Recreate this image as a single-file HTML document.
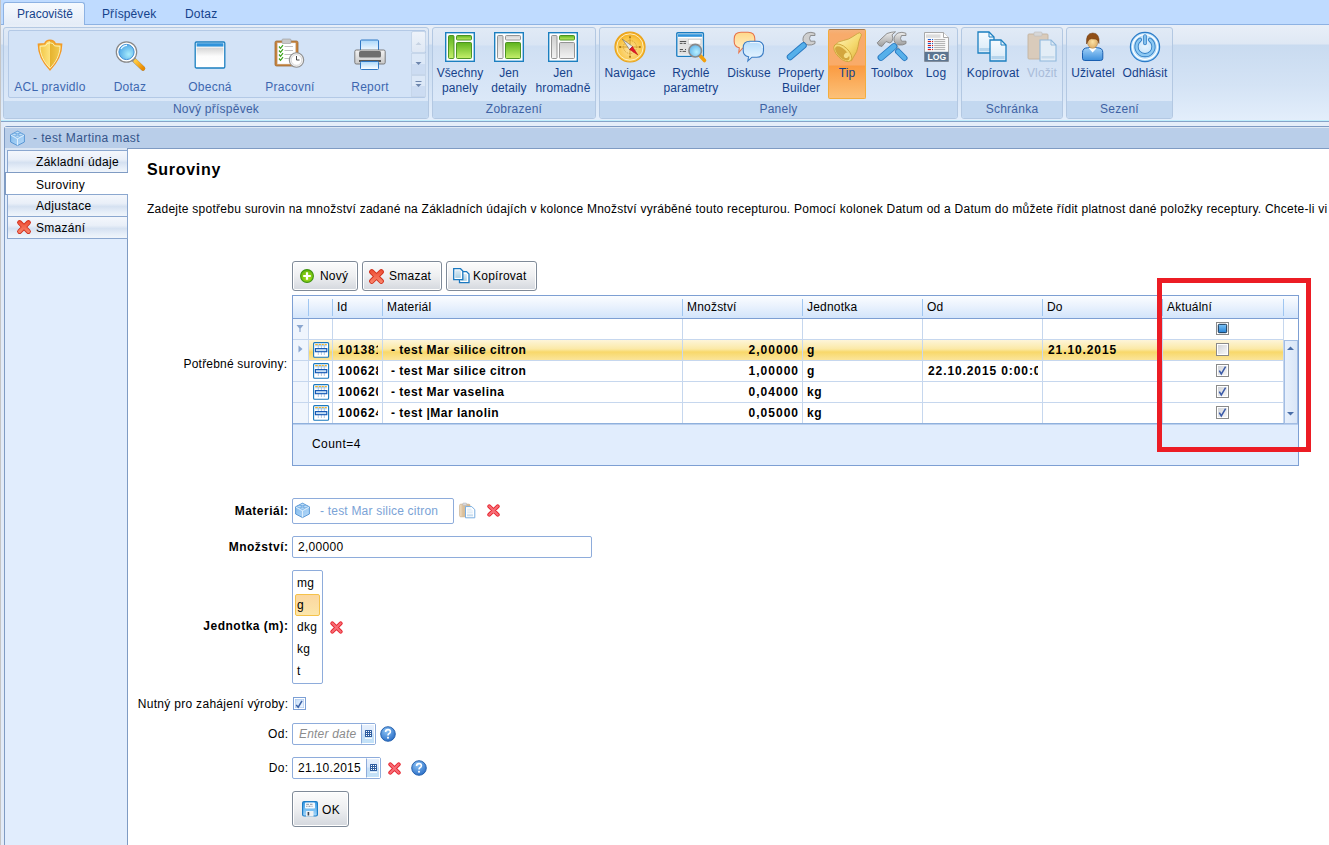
<!DOCTYPE html>
<html><head><meta charset="utf-8">
<style>
*{box-sizing:border-box;margin:0;padding:0}
html,body{width:1329px;height:845px;overflow:hidden;background:#fff;font-family:"Liberation Sans",sans-serif;font-size:12px;color:#000}
.a{position:absolute}
.t{position:absolute;white-space:nowrap;line-height:12px;font-size:12px;letter-spacing:0.25px}
</style></head><body>
<div class="a" style="left:0px;top:0px;width:1px;height:845px;background:#c5c5c5"></div>
<div class="a" style="left:1px;top:0px;width:1328px;height:24px;background:#bfdbff"></div>
<div class="a" style="left:1px;top:24px;width:1328px;height:97px;background:linear-gradient(#e9eff8 0px,#dfe8f4 20px,#c9dbf0 21px,#d4e3f5 61px,#e3eefb 96px)"></div>
<div class="a" style="left:1px;top:24px;width:1328px;height:1px;background:#8db2e3"></div>
<div class="a" style="left:1px;top:120px;width:1328px;height:1px;background:#bfeefc"></div>
<div class="a" style="left:1px;top:121px;width:1328px;height:1px;background:#86a3c8"></div>
<div class="a" style="left:1px;top:122px;width:1328px;height:4px;background:#e5eef9"></div>
<div class="a" style="left:3px;top:2px;width:82px;height:23px;border:1px solid #8db2e3;border-bottom:none;border-radius:3px 3px 0 0;background:linear-gradient(#f5f9fe,#e4ecf7)"></div>
<div class="t" style="left:17px;top:8px;font-size:12px;line-height:12px;color:#15428b;letter-spacing:0px;">Pracoviště</div>
<div class="t" style="left:102px;top:8px;font-size:12px;line-height:12px;color:#15428b;letter-spacing:0.1px;">Příspěvek</div>
<div class="t" style="left:185px;top:8px;font-size:12px;line-height:12px;color:#15428b;letter-spacing:0.2px;">Dotaz</div>
<div class="a" style="left:3px;top:27px;width:426px;height:92px;border:1px solid #b3c8e2;border-radius:3px;background:linear-gradient(#e1eaf6 0px,#d9e5f4 17px,#cfdff3 18px,#dbe8f8 73px);overflow:hidden"><div class="a" style="left:0;top:73px;width:424px;height:18px;background:#c3d8f0"></div></div>
<div class="t" style="left:3px;top:103px;width:426px;text-align:center;color:#3e62a3;letter-spacing:0.25px">Nový příspěvek</div>
<div class="a" style="left:432px;top:27px;width:164px;height:92px;border:1px solid #b3c8e2;border-radius:3px;background:linear-gradient(#e1eaf6 0px,#d9e5f4 17px,#cfdff3 18px,#dbe8f8 73px);overflow:hidden"><div class="a" style="left:0;top:73px;width:162px;height:18px;background:#c3d8f0"></div></div>
<div class="t" style="left:432px;top:103px;width:164px;text-align:center;color:#3e62a3;letter-spacing:0.25px">Zobrazení</div>
<div class="a" style="left:599px;top:27px;width:359px;height:92px;border:1px solid #b3c8e2;border-radius:3px;background:linear-gradient(#e1eaf6 0px,#d9e5f4 17px,#cfdff3 18px,#dbe8f8 73px);overflow:hidden"><div class="a" style="left:0;top:73px;width:357px;height:18px;background:#c3d8f0"></div></div>
<div class="t" style="left:599px;top:103px;width:359px;text-align:center;color:#3e62a3;letter-spacing:0.25px">Panely</div>
<div class="a" style="left:961px;top:27px;width:102px;height:92px;border:1px solid #b3c8e2;border-radius:3px;background:linear-gradient(#e1eaf6 0px,#d9e5f4 17px,#cfdff3 18px,#dbe8f8 73px);overflow:hidden"><div class="a" style="left:0;top:73px;width:100px;height:18px;background:#c3d8f0"></div></div>
<div class="t" style="left:961px;top:103px;width:102px;text-align:center;color:#3e62a3;letter-spacing:0.25px">Schránka</div>
<div class="a" style="left:1066px;top:27px;width:107px;height:92px;border:1px solid #b3c8e2;border-radius:3px;background:linear-gradient(#e1eaf6 0px,#d9e5f4 17px,#cfdff3 18px,#dbe8f8 73px);overflow:hidden"><div class="a" style="left:0;top:73px;width:105px;height:18px;background:#c3d8f0"></div></div>
<div class="t" style="left:1066px;top:103px;width:107px;text-align:center;color:#3e62a3;letter-spacing:0.25px">Sezení</div>
<div class="a" style="left:8px;top:30px;width:418px;height:68px;border:1px solid #b3c9e6;border-radius:2px;background:#d3e3f7"></div>
<div class="a" style="left:411px;top:31px;width:15px;height:22px;border:1px solid #c6d6ea;border-radius:2px;background:linear-gradient(#eef3fa,#dfe8f4)"></div>
<div class="a" style="left:411px;top:53px;width:15px;height:22px;border:1px solid #c6d6ea;background:linear-gradient(#dce8f7 50%,#ccdcf2 50%)"></div>
<div class="a" style="left:411px;top:75px;width:15px;height:22px;border:1px solid #c6d6ea;background:linear-gradient(#dce8f7 50%,#ccdcf2 50%)"></div>
<svg class="a" style="left:415px;top:61px" width="7" height="5" viewBox="0 0 7 5"><path d="M0.5 1 L6.5 1 L3.5 4 Z" fill="#6d86ad"/></svg>
<svg class="a" style="left:415px;top:81px" width="7" height="7" viewBox="0 0 7 7"><rect x="0.5" y="0" width="6" height="1" fill="#6d86ad"/><path d="M0.5 3 L6.5 3 L3.5 6 Z" fill="#6d86ad"/></svg>
<svg class="a" style="left:415px;top:41px" width="7" height="5" viewBox="0 0 7 5"><path d="M0.5 4 L6.5 4 L3.5 1 Z" fill="#c7d3e3"/></svg>
<div class="a" style="left:828px;top:29px;width:38px;height:70px;border:1px solid #f3ad3c;border-top-color:#a97a48;border-radius:2px;background:linear-gradient(#f4b27a 0px,#f8ab6b 4px,#f9ab69 35px,#fa9b42 36px,#fcc27a 69px)"></div>
<svg class="a" style="left:34px;top:39px;overflow:visible" width="32" height="32" viewBox="0 0 32 32"><defs><linearGradient id="sh1" x1="0" y1="0" x2="1" y2="0"><stop offset="0" stop-color="#f0c23c"/><stop offset="0.49" stop-color="#fde27e"/><stop offset="0.5" stop-color="#e6b22e"/><stop offset="1" stop-color="#f4cf56"/></linearGradient></defs><path d="M16 1.2 Q20 1.2 21.3 4.8 L27.6 5.3 C27.6 16 22.5 24 16 30.8 C9.5 24 4.4 16 4.4 5.3 L10.7 4.8 Q12 1.2 16 1.2 Z" fill="url(#sh1)" stroke="#f29a28" stroke-width="1.5"/><path d="M16 1.2 Q20 1.2 21.3 4.8 L27.6 5.3 C27.6 16 22.5 24 16 30.8 C9.5 24 4.4 16 4.4 5.3 L10.7 4.8 Q12 1.2 16 1.2 Z" transform="translate(16 16.5) scale(0.86) translate(-16 -16)" fill="none" stroke="#fff6c6" stroke-width="1"/></svg>
<svg class="a" style="left:114px;top:39px;overflow:visible" width="32" height="32" viewBox="0 0 32 32"><defs><radialGradient id="mg" cx="0.65" cy="0.65" r="0.7"><stop offset="0" stop-color="#a8ecfc"/><stop offset="1" stop-color="#4da6e6"/></radialGradient><linearGradient id="mh" x1="0" y1="0" x2="1" y2="1"><stop offset="0" stop-color="#ffc940"/><stop offset="1" stop-color="#e98a00"/></linearGradient></defs><path d="M19 20 L29 29.5" stroke="#8a8a8a" stroke-width="4.5" stroke-linecap="round"/><path d="M21.5 22.3 L29 29.5" stroke="url(#mh)" stroke-width="4.3" stroke-linecap="round"/><circle cx="12.5" cy="13" r="10.2" fill="#fff" stroke="#888" stroke-width="1.2"/><circle cx="12.5" cy="13" r="7.6" fill="url(#mg)" stroke="#3f8fd6" stroke-width="1"/><path d="M7 10 Q9 6.5 13 6.3" fill="none" stroke="#e8f8ff" stroke-width="1.2"/></svg>
<svg class="a" style="left:194px;top:39px;overflow:visible" width="32" height="32" viewBox="0 0 32 32"><defs><linearGradient id="wn" x1="0" y1="0" x2="0" y2="1"><stop offset="0" stop-color="#d4d4d4"/><stop offset="0.45" stop-color="#fbfbfb"/><stop offset="1" stop-color="#fff"/></linearGradient></defs><rect x="1.2" y="3" width="29.6" height="26" rx="1.2" fill="#fff" stroke="#1b7fc0" stroke-width="1.3"/><rect x="2.6" y="4.2" width="26.8" height="3.4" fill="#2f93db"/><rect x="2.6" y="8.6" width="26.8" height="19" fill="url(#wn)"/></svg>
<svg class="a" style="left:274px;top:38px;overflow:visible" width="32" height="32" viewBox="0 0 32 32"><rect x="1" y="3" width="23" height="25" rx="1.5" fill="#c8843d" stroke="#9b6a38" stroke-width="0.8"/><rect x="3.5" y="5" width="18" height="21" fill="#fff" stroke="#d9d9d9" stroke-width="0.5"/><rect x="8" y="1" width="9" height="4.5" rx="1" fill="#c8c8c8" stroke="#9a9a9a" stroke-width="0.6"/><path d="M5 8.5 L6.5 10.3 L9 7.2" fill="none" stroke="#3aa21a" stroke-width="1.2"/><path d="M10.5 8.5H19" stroke="#b9b9b9" stroke-width="0.9"/><path d="M5 12.5 L6.5 14.3 L9 11.2" fill="none" stroke="#3aa21a" stroke-width="1.2"/><path d="M10.5 12.5H19" stroke="#b9b9b9" stroke-width="0.9"/><path d="M5 16.5 L6.5 18.3 L9 15.2" fill="none" stroke="#3aa21a" stroke-width="1.2"/><path d="M10.5 16.5H19" stroke="#b9b9b9" stroke-width="0.9"/><path d="M5 20.5 L6.5 22.3 L9 19.2" fill="none" stroke="#3aa21a" stroke-width="1.2"/><path d="M10.5 20.5H19" stroke="#b9b9b9" stroke-width="0.9"/><circle cx="22.5" cy="22" r="7.2" fill="#f2f2f2" stroke="#8f8f8f" stroke-width="1.1"/><circle cx="22.5" cy="22" r="5.3" fill="#fff" stroke="#c4c4c4" stroke-width="0.6"/><path d="M22.5 18V22H25.5" fill="none" stroke="#333" stroke-width="0.9"/></svg>
<svg class="a" style="left:354px;top:39px;overflow:visible" width="32" height="32" viewBox="0 0 32 32"><defs><linearGradient id="pp" x1="0" y1="0" x2="0" y2="1"><stop offset="0" stop-color="#a9d7fb"/><stop offset="1" stop-color="#ffffff"/></linearGradient><linearGradient id="pb" x1="0" y1="0" x2="0" y2="1"><stop offset="0" stop-color="#f3f3f3"/><stop offset="1" stop-color="#c9c9c9"/></linearGradient></defs><rect x="6.5" y="1" width="18" height="12" rx="1" fill="url(#pp)" stroke="#2f78c4" stroke-width="1"/><rect x="0.8" y="11" width="30.4" height="14" rx="1.5" fill="url(#pb)" stroke="#6f6f6f" stroke-width="0.9"/><rect x="5" y="12" width="22" height="6.5" rx="1.5" fill="#6e6e6e"/><rect x="5" y="21" width="22" height="2" fill="#5a5a5a"/><rect x="6.5" y="22.5" width="18" height="8" rx="1" fill="url(#pp)" stroke="#2f78c4" stroke-width="1"/></svg>
<svg class="a" style="left:445px;top:32px;overflow:visible" width="30" height="30" viewBox="0 0 30 30"><defs><linearGradient id="lg" x1="0" y1="0" x2="0" y2="1"><stop offset="0" stop-color="#5db31d"/><stop offset="1" stop-color="#c5f06b"/></linearGradient><linearGradient id="lgr" x1="0" y1="0" x2="0" y2="1"><stop offset="0" stop-color="#cfcfcf"/><stop offset="1" stop-color="#f3f3f3"/></linearGradient></defs><rect x="0.7" y="0.7" width="28.6" height="28.6" fill="#fff" stroke="#1b7fc0" stroke-width="1.4"/><rect x="3.5" y="3.5" width="5.5" height="23" rx="1" fill="url(#lg)" stroke="#3f8a16" stroke-width="0.9"/><rect x="11.5" y="3.5" width="15" height="4.5" rx="1" fill="url(#lg)" stroke="#3f8a16" stroke-width="0.9"/><rect x="11.5" y="10.5" width="15" height="16" rx="1" fill="url(#lg)" stroke="#3f8a16" stroke-width="0.9"/></svg>
<svg class="a" style="left:494px;top:32px;overflow:visible" width="30" height="30" viewBox="0 0 30 30"><defs><linearGradient id="lg" x1="0" y1="0" x2="0" y2="1"><stop offset="0" stop-color="#5db31d"/><stop offset="1" stop-color="#c5f06b"/></linearGradient><linearGradient id="lgr" x1="0" y1="0" x2="0" y2="1"><stop offset="0" stop-color="#cfcfcf"/><stop offset="1" stop-color="#f3f3f3"/></linearGradient></defs><rect x="0.7" y="0.7" width="28.6" height="28.6" fill="#fff" stroke="#1b7fc0" stroke-width="1.4"/><rect x="3.5" y="3.5" width="5.5" height="23" rx="1" fill="url(#lgr)" stroke="#8a8a8a" stroke-width="0.9"/><rect x="11.5" y="3.5" width="15" height="4.5" rx="1" fill="url(#lgr)" stroke="#8a8a8a" stroke-width="0.9"/><rect x="11.5" y="10.5" width="15" height="16" rx="1" fill="url(#lg)" stroke="#3f8a16" stroke-width="0.9"/></svg>
<svg class="a" style="left:548px;top:32px;overflow:visible" width="30" height="30" viewBox="0 0 30 30"><defs><linearGradient id="lg" x1="0" y1="0" x2="0" y2="1"><stop offset="0" stop-color="#5db31d"/><stop offset="1" stop-color="#c5f06b"/></linearGradient><linearGradient id="lgr" x1="0" y1="0" x2="0" y2="1"><stop offset="0" stop-color="#cfcfcf"/><stop offset="1" stop-color="#f3f3f3"/></linearGradient></defs><rect x="0.7" y="0.7" width="28.6" height="28.6" fill="#fff" stroke="#1b7fc0" stroke-width="1.4"/><rect x="3.5" y="3.5" width="5.5" height="23" rx="1" fill="url(#lgr)" stroke="#8a8a8a" stroke-width="0.9"/><rect x="11.5" y="3.5" width="15" height="4.5" rx="1" fill="url(#lg)" stroke="#3f8a16" stroke-width="0.9"/><rect x="11.5" y="10.5" width="15" height="16" rx="1" fill="url(#lgr)" stroke="#8a8a8a" stroke-width="0.9"/></svg>
<svg class="a" style="left:614px;top:31px;overflow:visible" width="32" height="32" viewBox="0 0 32 32"><defs><radialGradient id="cp" cx="0.5" cy="0.6" r="0.55"><stop offset="0" stop-color="#fde3a0"/><stop offset="0.75" stop-color="#f9c443"/><stop offset="1" stop-color="#f2aa1c"/></radialGradient></defs><circle cx="16" cy="16" r="15" fill="url(#cp)" stroke="#e9a21a" stroke-width="1.2"/><circle cx="16" cy="16" r="13.2" fill="none" stroke="#fff4cf" stroke-width="0.9"/><circle cx="16" cy="16" r="6.5" fill="none" stroke="#c9921f" stroke-width="0.7" stroke-dasharray="1.2 0.8"/><path d="M16 6V26M6 16H26" stroke="#d6a030" stroke-width="1"/><path d="M15.3 5.2H16.7V7H15.3ZM15.3 25H16.7V26.8H15.3ZM5.2 15.3H7V16.7H5.2ZM25 15.3H26.8V16.7H25Z" fill="#9a6a10"/><path d="M8.3 8.1 L18.5 15.5 L15.5 18.5 Z" fill="#e9ecf2" stroke="#555" stroke-width="0.5"/><path d="M23.9 24 L18.5 15.5 L15.5 18.5 Z" fill="#e2152a" stroke="#a00" stroke-width="0.4"/></svg>
<svg class="a" style="left:676px;top:32px;overflow:visible" width="32" height="32" viewBox="0 0 32 32"><defs><radialGradient id="qg" cx="0.6" cy="0.6" r="0.7"><stop offset="0" stop-color="#b7f0ff"/><stop offset="1" stop-color="#59aee8"/></radialGradient></defs><rect x="0.8" y="0.8" width="26.6" height="23.6" rx="1" fill="#fff" stroke="#1a7cc0" stroke-width="1.4"/><rect x="2" y="2.2" width="24.2" height="2.6" fill="#2f93db"/><rect x="2.2" y="6.2" width="24" height="16.5" fill="#e2e2e2"/><rect x="12.3" y="7.4" width="12.6" height="4.7" fill="#fff" stroke="#bbb" stroke-width="0.5"/><path d="M3.8 9.5H10.2M3.8 11.4H6.5M7.5 11.4H10M3.8 17.5H7M9 17.5H10M3.8 19.4H5.5M6.5 19.4H10" stroke="#444" stroke-width="0.9"/><path d="M23.5 23 L28.5 28.5" stroke="#f29f0c" stroke-width="3.6" stroke-linecap="round"/><circle cx="19.2" cy="18.7" r="6.3" fill="url(#qg)" stroke="#8a8a8a" stroke-width="1.6"/></svg>
<svg class="a" style="left:733px;top:31px;overflow:visible" width="32" height="32" viewBox="0 0 32 32"><defs><linearGradient id="bo" x1="0" y1="0" x2="0" y2="1"><stop offset="0" stop-color="#ffd88a"/><stop offset="1" stop-color="#fff3cf"/></linearGradient><linearGradient id="bb" x1="0" y1="0" x2="0" y2="1"><stop offset="0" stop-color="#b5dcfb"/><stop offset="1" stop-color="#eef8ff"/></linearGradient></defs><path d="M8 1.2 H15 Q21.8 1.2 21.8 8 V10.5 Q21.8 17.2 15 17.2 H9.5 L5.8 21.5 L6.3 16.8 Q1.2 15.5 1.2 10.5 V8 Q1.2 1.2 8 1.2 Z" fill="url(#bo)" stroke="#e8744a" stroke-width="1.1"/><path d="M17 10.3 H23.8 Q30.5 10.3 30.5 16.8 V19.5 Q30.5 26.2 23.8 26.2 H19 L14.8 30 L15.6 25.8 Q10.2 24.8 10.2 19.5 V16.8 Q10.2 10.3 17 10.3 Z" fill="url(#bb)" stroke="#3b7cc4" stroke-width="1.1"/><path d="M17 11.5 H23.8 Q29.3 11.5 29.3 16.8" fill="none" stroke="#fff" stroke-width="0.8"/></svg>
<svg class="a" style="left:785px;top:30px;overflow:visible" width="32" height="32" viewBox="0 0 32 32"><path d="M29.8 3.2 Q26 1.5 22 3 Q17.5 5.5 18 10.5 Q18.8 14.5 23 15 Q27 15.5 30 13.5 L30 11.2 L25.5 11.2 Q23.5 8.5 25.5 5.5 L30 5.5 Z" fill="#cfcfcf" stroke="#858585" stroke-width="0.9"/><path d="M18.5 15.5 L5 27" stroke="#2878c0" stroke-width="6.5" stroke-linecap="round"/><path d="M18.5 15.5 L5 27" stroke="#56b0ea" stroke-width="4.7" stroke-linecap="round"/></svg>
<svg class="a" style="left:832px;top:31px;overflow:visible" width="32" height="32" viewBox="0 0 32 32"><defs><linearGradient id="bl" x1="0" y1="0" x2="1" y2="1"><stop offset="0" stop-color="#fff6c4"/><stop offset="0.55" stop-color="#f5da70"/><stop offset="1" stop-color="#e0b03a"/></linearGradient></defs><path d="M2.5 14.5 Q6 10 11.5 9.5 Q17 8.5 21 5.5 L25.5 2.6 L27.5 1.8 L29.5 3.5 L28.8 5.6 Q26.5 10 26 15.5 Q25.5 20.5 21.5 26 L19.5 29.8 Z" fill="url(#bl)" stroke="#c8a03a" stroke-width="0.8" stroke-linejoin="round"/><ellipse cx="10.8" cy="21.8" rx="11.2" ry="5.8" transform="rotate(44 10.8 21.8)" fill="#f6dc7a" stroke="#c9a035" stroke-width="0.8"/><ellipse cx="10.3" cy="22.3" rx="9.2" ry="4.3" transform="rotate(44 10.3 22.3)" fill="#d3a63e"/><ellipse cx="14.5" cy="24.3" rx="2.3" ry="2.9" transform="rotate(44 14.5 24.3)" fill="#f7e08a"/></svg>
<svg class="a" style="left:876px;top:30px;overflow:visible" width="32" height="32" viewBox="0 0 32 32"><defs><linearGradient id="tg" x1="0" y1="0" x2="0" y2="1"><stop offset="0" stop-color="#f0f0f0"/><stop offset="1" stop-color="#9c9c9c"/></linearGradient></defs><path d="M29.8 3.2 Q26 1.5 22 3 Q17.5 5.5 18 10.5 Q18.8 14.5 23 15 Q27 15.5 30 13.5 L30 11.2 L25.5 11.2 Q23.5 8.5 25.5 5.5 L30 5.5 Z" fill="url(#tg)" stroke="#858585" stroke-width="0.9"/><path d="M19 13.5 L22.5 19.5" stroke="#bdbdbd" stroke-width="3"/><path d="M22 21.5 L28.5 28" stroke="#2878c0" stroke-width="6" stroke-linecap="round"/><path d="M22 21.5 L28.5 28" stroke="#56b0ea" stroke-width="4.2" stroke-linecap="round"/><path d="M1.2 12.8 L5 9 L11 3.5 Q15 2 19.5 1.8 L16 4.8 Q17.8 8 16 11.5 L13.9 13 L10 11.5 L5.9 16.5 L3 15.5 Z" fill="url(#tg)" stroke="#858585" stroke-width="0.9" stroke-linejoin="round"/><path d="M18 16.5 L5 27.5" stroke="#2878c0" stroke-width="6.8" stroke-linecap="round"/><path d="M18 16.5 L5 27.5" stroke="#56b0ea" stroke-width="5" stroke-linecap="round"/></svg>
<svg class="a" style="left:923px;top:32px;overflow:visible" width="32" height="32" viewBox="0 0 32 32"><path d="M1.5 0.5 H20.5 L25.5 5.5 V29.5 H1.5 Z" fill="#fafafa" stroke="#a0a0a0" stroke-width="0.9"/><rect x="3" y="2.4" width="14.5" height="3.4" fill="#dcdcdc"/><path d="M20.5 0.5 V5.5 H25.5" fill="#fff" stroke="#a0a0a0" stroke-width="0.9"/><rect x="4.8" y="7" width="3.2" height="1.1" fill="#1d5fd0"/><rect x="9" y="7" width="1.1" height="1.1" fill="#1d5fd0"/><rect x="11.2" y="7" width="11" height="1.1" fill="#b5b5b5"/><rect x="4.8" y="9" width="3.2" height="1.1" fill="#d81818"/><rect x="9" y="9" width="1.1" height="1.1" fill="#d81818"/><rect x="11.2" y="9" width="11" height="1.1" fill="#b5b5b5"/><rect x="4.8" y="11" width="3.2" height="1.1" fill="#1d5fd0"/><rect x="9" y="11" width="1.1" height="1.1" fill="#1d5fd0"/><rect x="11.2" y="11" width="11" height="1.1" fill="#b5b5b5"/><rect x="4.8" y="13" width="3.2" height="1.1" fill="#d81818"/><rect x="9" y="13" width="1.1" height="1.1" fill="#d81818"/><rect x="11.2" y="13" width="11" height="1.1" fill="#b5b5b5"/><rect x="4.8" y="15" width="3.2" height="1.1" fill="#1d5fd0"/><rect x="9" y="15" width="1.1" height="1.1" fill="#1d5fd0"/><rect x="11.2" y="15" width="11" height="1.1" fill="#b5b5b5"/><rect x="4.8" y="17" width="3.2" height="1.1" fill="#d81818"/><rect x="9" y="17" width="1.1" height="1.1" fill="#d81818"/><rect x="11.2" y="17" width="11" height="1.1" fill="#b5b5b5"/><rect x="1.5" y="19.8" width="24" height="9.7" fill="#5d7590"/><text x="13.8" y="27.9" font-family="Liberation Sans" font-weight="bold" font-size="8.6" fill="#fff" text-anchor="middle">LOG</text></svg>
<svg class="a" style="left:977px;top:31px;overflow:visible" width="32" height="32" viewBox="0 0 32 32"><defs><linearGradient id="cpg" x1="0" y1="0" x2="0" y2="1"><stop offset="0" stop-color="#f6fbff"/><stop offset="1" stop-color="#d7e9f7"/></linearGradient></defs><path d="M1 1 H12 L17 6 V22 H1 Z" fill="url(#cpg)" stroke="#1b7fc0" stroke-width="1.3"/><path d="M12 1 V6 H17" fill="none" stroke="#1b7fc0" stroke-width="1"/><rect x="2.5" y="17" width="13" height="3" fill="#b5d4ec"/><path d="M13 9 H24 L29 14 V30 H13 Z" fill="url(#cpg)" stroke="#1b7fc0" stroke-width="1.3"/><path d="M24 9 V14 H29" fill="none" stroke="#1b7fc0" stroke-width="1"/><rect x="14.5" y="25" width="13" height="3" fill="#b5d4ec"/></svg>
<svg class="a" style="left:1027px;top:31px;overflow:visible" width="32" height="32" viewBox="0 0 32 32"><rect x="1" y="3" width="20" height="25" rx="1" fill="#d9cbbb" stroke="#c3b3a0" stroke-width="0.9"/><rect x="7" y="1" width="8" height="4" rx="1" fill="#d7d7d7" stroke="#bcbcbc" stroke-width="0.6"/><path d="M13 9 H24 L29 14 V30 H13 Z" fill="#e3edf6" stroke="#8fb8dc" stroke-width="1.1"/><path d="M24 9 V14 H29" fill="none" stroke="#8fb8dc" stroke-width="0.9"/><rect x="14.5" y="25" width="13" height="2.5" fill="#c9dcec"/></svg>
<svg class="a" style="left:1077px;top:31px;overflow:visible" width="32" height="32" viewBox="0 0 32 32"><defs><linearGradient id="ub" x1="0" y1="0" x2="0" y2="1"><stop offset="0" stop-color="#9fd0f8"/><stop offset="1" stop-color="#3d8fdc"/></linearGradient><radialGradient id="uf" cx="0.5" cy="0.5" r="0.6"><stop offset="0" stop-color="#fde3a6"/><stop offset="1" stop-color="#d9a45c"/></radialGradient></defs><path d="M5.5 21.5 Q5.5 17 10.5 16.8 H20.8 Q25.8 17 25.8 21.5 V27.3 Q25.8 29.5 23.5 29.5 H7.8 Q5.5 29.5 5.5 27.3 Z" fill="url(#ub)" stroke="#1b5fb0" stroke-width="1"/><path d="M11.5 17 L15.6 21.5 L19.8 17 Z" fill="#fff"/><ellipse cx="15.6" cy="10.8" rx="5.3" ry="6.5" fill="url(#uf)" stroke="#a87a3e" stroke-width="0.5"/><path d="M9.5 13 Q8.5 2 15.8 2 Q23 2 22 12.5 Q21 7.5 16.5 8 Q12 7 10.8 10.5 Z" fill="#8f4f18" stroke="#6c3a10" stroke-width="0.5"/></svg>
<svg class="a" style="left:1129px;top:31px;overflow:visible" width="32" height="32" viewBox="0 0 32 32"><defs><radialGradient id="pw" cx="0.5" cy="0.45" r="0.55"><stop offset="0" stop-color="#e9f5ff"/><stop offset="1" stop-color="#a8d6f7"/></radialGradient></defs><circle cx="16" cy="16" r="14.6" fill="url(#pw)" stroke="#2a7bc8" stroke-width="1.2"/><circle cx="16" cy="16" r="12.4" fill="none" stroke="#fff" stroke-width="1.2"/><path d="M11 8.8 A8.5 8.5 0 1 0 21 8.8" fill="none" stroke="#2f7dc4" stroke-width="4.2" stroke-linecap="round"/><path d="M11 8.8 A8.5 8.5 0 1 0 21 8.8" fill="none" stroke="#8cc8f2" stroke-width="2.4" stroke-linecap="round"/><path d="M16 5 V12.5" stroke="#2f7dc4" stroke-width="3.6" stroke-linecap="round"/><path d="M16 5 V12.5" stroke="#8cc8f2" stroke-width="1.8" stroke-linecap="round"/></svg>
<div class="t" style="left:5px;top:81px;width:90px;text-align:center;color:#3d67b0">ACL pravidlo</div>
<div class="t" style="left:85px;top:81px;width:90px;text-align:center;color:#3d67b0">Dotaz</div>
<div class="t" style="left:165px;top:81px;width:90px;text-align:center;color:#3d67b0">Obecná</div>
<div class="t" style="left:245px;top:81px;width:90px;text-align:center;color:#3d67b0">Pracovní</div>
<div class="t" style="left:325px;top:81px;width:90px;text-align:center;color:#3d67b0">Report</div>
<div class="t" style="left:410px;top:67px;width:100px;text-align:center;color:#15428b;letter-spacing:0.1px">Všechny</div>
<div class="t" style="left:410px;top:82px;width:100px;text-align:center;color:#15428b;letter-spacing:0.1px">panely</div>
<div class="t" style="left:459px;top:67px;width:100px;text-align:center;color:#15428b;letter-spacing:0.1px">Jen</div>
<div class="t" style="left:459px;top:82px;width:100px;text-align:center;color:#15428b;letter-spacing:0.1px">detaily</div>
<div class="t" style="left:513px;top:67px;width:100px;text-align:center;color:#15428b;letter-spacing:0.1px">Jen</div>
<div class="t" style="left:513px;top:82px;width:100px;text-align:center;color:#15428b;letter-spacing:0.1px">hromadně</div>
<div class="t" style="left:580px;top:67px;width:100px;text-align:center;color:#15428b;letter-spacing:0.1px">Navigace</div>
<div class="t" style="left:641px;top:67px;width:100px;text-align:center;color:#15428b;letter-spacing:0.1px">Rychlé</div>
<div class="t" style="left:641px;top:82px;width:100px;text-align:center;color:#15428b;letter-spacing:0.1px">parametry</div>
<div class="t" style="left:699px;top:67px;width:100px;text-align:center;color:#15428b;letter-spacing:0.1px">Diskuse</div>
<div class="t" style="left:751px;top:67px;width:100px;text-align:center;color:#15428b;letter-spacing:0.1px">Property</div>
<div class="t" style="left:751px;top:82px;width:100px;text-align:center;color:#15428b;letter-spacing:0.1px">Builder</div>
<div class="t" style="left:797px;top:67px;width:100px;text-align:center;color:#15428b;letter-spacing:0.1px">Tip</div>
<div class="t" style="left:842px;top:67px;width:100px;text-align:center;color:#15428b;letter-spacing:0.1px">Toolbox</div>
<div class="t" style="left:886px;top:67px;width:100px;text-align:center;color:#15428b;letter-spacing:0.1px">Log</div>
<div class="t" style="left:943px;top:67px;width:100px;text-align:center;color:#15428b;letter-spacing:0.1px">Kopírovat</div>
<div class="t" style="left:992px;top:67px;width:100px;text-align:center;color:#a9bcd9;letter-spacing:0.1px">Vložit</div>
<div class="t" style="left:1043px;top:67px;width:100px;text-align:center;color:#15428b;letter-spacing:0.1px">Uživatel</div>
<div class="t" style="left:1095px;top:67px;width:100px;text-align:center;color:#15428b;letter-spacing:0.1px">Odhlásit</div>
<div class="a" style="left:1px;top:122px;width:3px;height:723px;background:#e2ebf8"></div>
<div class="a" style="left:4px;top:126px;width:1325px;height:719px;border:1px solid #7f9bc3;border-right:none;border-bottom:none;border-radius:3px 0 0 0;background:#e1edfd"></div>
<div class="a" style="left:5px;top:127px;width:1324px;height:1px;background:#dfe8f4"></div>
<div class="a" style="left:5px;top:128px;width:1324px;height:20px;background:#b9cee9"></div>
<div class="a" style="left:5px;top:148px;width:122px;height:2px;background:#dce7f5"></div>
<div class="a" style="left:127px;top:148px;width:1202px;height:1px;background:#7f9bc3"></div>
<svg class="a" style="left:10px;top:130px;overflow:visible" width="16" height="16" viewBox="0 0 16 16"><defs><linearGradient id="cb" x1="0" y1="0" x2="1" y2="1"><stop offset="0" stop-color="#7fb8ea"/><stop offset="1" stop-color="#b7dafa"/></linearGradient></defs><path d="M0.6 4.8 L7.5 1.2 L14.4 4.8 L14.4 12 L7.5 15.6 L0.6 12 Z" fill="url(#cb)" stroke="#4f90d0" stroke-width="0.9" stroke-linejoin="round"/><path d="M0.8 5 L7.5 8.6 L14.2 5 L7.5 1.4 Z" fill="#a6d0f6"/><ellipse cx="7.5" cy="2.6" rx="2.1" ry="1" fill="#c9e4fb" stroke="#5a9ad6" stroke-width="0.6"/><ellipse cx="4.3" cy="4.4" rx="2.1" ry="1" fill="#c9e4fb" stroke="#5a9ad6" stroke-width="0.6"/><ellipse cx="10.7" cy="4.4" rx="2.1" ry="1" fill="#c9e4fb" stroke="#5a9ad6" stroke-width="0.6"/><ellipse cx="7.5" cy="6.2" rx="2.1" ry="1" fill="#c9e4fb" stroke="#5a9ad6" stroke-width="0.6"/><path d="M1 5.3 L7.5 8.8 L14 5.3 M7.5 8.8 V15.3" fill="none" stroke="#eef8ff" stroke-width="0.8"/></svg>
<div class="t" style="left:33px;top:132px;font-size:12px;line-height:12px;color:#34548a;letter-spacing:0.4px;">- test Martina mast</div>
<div class="a" style="left:127px;top:149px;width:1202px;height:696px;background:#fff"></div>
<div class="a" style="left:127px;top:149px;width:1px;height:696px;background:#7f9bc3"></div>
<div class="a" style="left:7px;top:150px;width:121px;height:23px;border:1px solid #8ba7cf;background:linear-gradient(#f4f7fc 0%,#e9eff8 40%,#d5e1f1 55%,#e6eef8 80%,#f0f5fb 100%)"></div>
<div class="t" style="left:36px;top:156px;font-size:12px;line-height:12px;letter-spacing:0.3px;">Základní údaje</div>
<div class="a" style="left:5px;top:172px;width:123px;height:23px;background:#fff;border:1px solid #7f9bc3;border-right:none"></div>
<div class="t" style="left:36px;top:179px;font-size:12px;line-height:12px;letter-spacing:0.3px;">Suroviny</div>
<div class="a" style="left:7px;top:194px;width:121px;height:23px;border:1px solid #8ba7cf;background:linear-gradient(#f4f7fc 0%,#e9eff8 40%,#d5e1f1 55%,#e6eef8 80%,#f0f5fb 100%)"></div>
<div class="t" style="left:36px;top:200px;font-size:12px;line-height:12px;letter-spacing:0.3px;">Adjustace</div>
<div class="a" style="left:7px;top:216px;width:121px;height:23px;border:1px solid #8ba7cf;background:linear-gradient(#f4f7fc 0%,#e9eff8 40%,#d5e1f1 55%,#e6eef8 80%,#f0f5fb 100%)"></div>
<div class="t" style="left:36px;top:222px;font-size:12px;line-height:12px;letter-spacing:0.3px;">Smazání</div>
<svg class="a" style="left:17px;top:220px;overflow:visible" width="14" height="14" viewBox="0 0 14 14"><defs><linearGradient id="rx" gradientUnits="userSpaceOnUse" x1="0" y1="0" x2="0" y2="14"><stop offset="0" stop-color="#ec4a30"/><stop offset="1" stop-color="#fb8a70"/></linearGradient></defs><path d="M2.6 2.6L11.4 11.4M11.4 2.6L2.6 11.4" stroke="#d2321e" stroke-width="5" stroke-linecap="round"/><path d="M2.6 2.6L11.4 11.4M11.4 2.6L2.6 11.4" stroke="url(#rx)" stroke-width="3.2" stroke-linecap="round"/></svg>
<div class="t" style="left:147px;top:162px;font-size:16px;line-height:16px;font-weight:bold;letter-spacing:0.7px;">Suroviny</div>
<div class="t" style="left:147px;top:203px;font-size:12px;line-height:12px;letter-spacing:0.25px;">Zadejte spotřebu surovin na množství zadané na Základních údajích v kolonce Množství vyráběné touto recepturou. Pomocí kolonek Datum od a Datum do můžete řídit platnost dané položky receptury. Chcete-li vi</div>
<div class="t" style="left:-113px;top:358px;width:400.2px;text-align:right;font-size:12px;line-height:12px;letter-spacing:0.2px;">Potřebné suroviny:</div>
<div class="a" style="left:292px;top:261px;width:66px;height:30px;border:1px solid #7f8a98;border-radius:3px;box-shadow:inset 0 0 0 1px #fff;background:linear-gradient(#fcfcfc,#eeeff1 50%,#d4d8de)"></div>
<div class="a" style="left:362px;top:261px;width:80px;height:30px;border:1px solid #7f8a98;border-radius:3px;box-shadow:inset 0 0 0 1px #fff;background:linear-gradient(#fcfcfc,#eeeff1 50%,#d4d8de)"></div>
<div class="a" style="left:446px;top:261px;width:91px;height:30px;border:1px solid #7f8a98;border-radius:3px;box-shadow:inset 0 0 0 1px #fff;background:linear-gradient(#fcfcfc,#eeeff1 50%,#d4d8de)"></div>
<div class="t" style="left:320px;top:270px;font-size:12px;line-height:12px;letter-spacing:0.2px;">Nový</div>
<div class="t" style="left:389px;top:270px;font-size:12px;line-height:12px;letter-spacing:0.25px;">Smazat</div>
<div class="t" style="left:473px;top:270px;font-size:12px;line-height:12px;letter-spacing:0.25px;">Kopírovat</div>
<svg class="a" style="left:300px;top:269px;overflow:visible" width="14" height="14" viewBox="0 0 14 14"><defs><radialGradient id="gp" cx="0.55" cy="0.65" r="0.7"><stop offset="0" stop-color="#a6e01c"/><stop offset="1" stop-color="#5fb30c"/></radialGradient></defs><circle cx="7" cy="7" r="6.4" fill="url(#gp)" stroke="#3f9410" stroke-width="1.1"/><path d="M7 3.2V10.8M3.2 7H10.8" stroke="#fff" stroke-width="2.2"/></svg><svg class="a" style="left:369px;top:269px;overflow:visible" width="15" height="15" viewBox="0 0 14 14"><defs><linearGradient id="rx" gradientUnits="userSpaceOnUse" x1="0" y1="0" x2="0" y2="14"><stop offset="0" stop-color="#ec4a30"/><stop offset="1" stop-color="#fb8a70"/></linearGradient></defs><path d="M2.6 2.6L11.4 11.4M11.4 2.6L2.6 11.4" stroke="#d2321e" stroke-width="5" stroke-linecap="round"/><path d="M2.6 2.6L11.4 11.4M11.4 2.6L2.6 11.4" stroke="url(#rx)" stroke-width="3.2" stroke-linecap="round"/></svg><svg class="a" style="left:453px;top:268px;overflow:visible" width="17" height="16" viewBox="0 0 17 16"><defs><linearGradient id="csg" x1="0" y1="0" x2="0" y2="1"><stop offset="0" stop-color="#dbeaf4"/><stop offset="1" stop-color="#a9cfe3"/></linearGradient></defs><path d="M6.5 3.6 H13.5 L16 6.1 V14.6 H6.5 Z" fill="#fff" stroke="#1a78c0" stroke-width="1.3"/><rect x="8.2" y="6" width="5.6" height="6.8" fill="url(#csg)"/><path d="M0.7 0.7 H7.5 L9.8 3 V11.7 H0.7 Z" fill="#fff" stroke="#1a78c0" stroke-width="1.3"/><rect x="2.2" y="2.3" width="5.6" height="7.6" fill="url(#csg)"/></svg>
<div class="a" style="left:292px;top:295px;width:1007px;height:171px;border:1px solid #7d9fd3;background:#e1edfd"></div>
<div class="a" style="left:293px;top:296px;width:1005px;height:22px;background:linear-gradient(#fbfdff,#eaf2fd 45%,#d3e5fb 100%)"></div>
<div class="a" style="left:293px;top:318px;width:1005px;height:1px;background:#7d9fd3"></div>
<div class="a" style="left:308px;top:299px;width:1px;height:17px;background:#9fc6f1"></div>
<div class="a" style="left:332px;top:299px;width:1px;height:17px;background:#9fc6f1"></div>
<div class="a" style="left:382px;top:299px;width:1px;height:17px;background:#9fc6f1"></div>
<div class="a" style="left:682px;top:299px;width:1px;height:17px;background:#9fc6f1"></div>
<div class="a" style="left:802px;top:299px;width:1px;height:17px;background:#9fc6f1"></div>
<div class="a" style="left:922px;top:299px;width:1px;height:17px;background:#9fc6f1"></div>
<div class="a" style="left:1042px;top:299px;width:1px;height:17px;background:#9fc6f1"></div>
<div class="a" style="left:1162px;top:299px;width:1px;height:17px;background:#9fc6f1"></div>
<div class="a" style="left:1283px;top:299px;width:1px;height:17px;background:#9fc6f1"></div>
<div class="t" style="left:337px;top:301px;font-size:12px;line-height:12px;letter-spacing:0.2px;">Id</div>
<div class="t" style="left:387px;top:301px;font-size:12px;line-height:12px;letter-spacing:0.2px;">Materiál</div>
<div class="t" style="left:687px;top:301px;font-size:12px;line-height:12px;letter-spacing:0.2px;">Množství</div>
<div class="t" style="left:807px;top:301px;font-size:12px;line-height:12px;letter-spacing:0.2px;">Jednotka</div>
<div class="t" style="left:927px;top:301px;font-size:12px;line-height:12px;letter-spacing:0.2px;">Od</div>
<div class="t" style="left:1047px;top:301px;font-size:12px;line-height:12px;letter-spacing:0.2px;">Do</div>
<div class="t" style="left:1167px;top:301px;font-size:12px;line-height:12px;letter-spacing:0.2px;">Aktuální</div>
<div class="a" style="left:293px;top:319px;width:990px;height:104px;background:#fff"></div>
<div class="a" style="left:1283px;top:319px;width:15px;height:21px;background:#fff"></div>
<div class="a" style="left:293px;top:319px;width:15px;height:104px;background:#eff5fd"></div>
<div class="a" style="left:308px;top:340px;width:975px;height:20px;background:linear-gradient(#fdf5d9 0%,#fbe9a6 45%,#f8d86a 60%,#fbe59b 100%)"></div>
<div class="a" style="left:293px;top:339px;width:990px;height:1px;background:#c6d7ee"></div>
<div class="a" style="left:293px;top:360px;width:990px;height:1px;background:#c6d7ee"></div>
<div class="a" style="left:293px;top:381px;width:990px;height:1px;background:#c6d7ee"></div>
<div class="a" style="left:293px;top:402px;width:990px;height:1px;background:#c6d7ee"></div>
<div class="a" style="left:293px;top:423px;width:1005px;height:1px;background:#8fb0dc"></div>
<div class="a" style="left:293px;top:424px;width:1005px;height:1px;background:#b9cfee"></div>
<div class="a" style="left:308px;top:319px;width:1px;height:104px;background:#c6d7ee"></div>
<div class="a" style="left:332px;top:319px;width:1px;height:104px;background:#c6d7ee"></div>
<div class="a" style="left:382px;top:319px;width:1px;height:104px;background:#c6d7ee"></div>
<div class="a" style="left:682px;top:319px;width:1px;height:104px;background:#c6d7ee"></div>
<div class="a" style="left:802px;top:319px;width:1px;height:104px;background:#c6d7ee"></div>
<div class="a" style="left:922px;top:319px;width:1px;height:104px;background:#c6d7ee"></div>
<div class="a" style="left:1042px;top:319px;width:1px;height:104px;background:#c6d7ee"></div>
<div class="a" style="left:1162px;top:319px;width:1px;height:104px;background:#c6d7ee"></div>
<div class="a" style="left:1283px;top:319px;width:1px;height:104px;background:#c6d7ee"></div>
<div class="a" style="left:1284px;top:340px;width:14px;height:84px;border:1px solid #a3bde3;background:linear-gradient(90deg,#e7f0fc,#dae6f7)"></div>
<svg class="a" style="left:1286px;top:345px" width="9" height="6" viewBox="0 0 9 6"><path d="M1 5 L8 5 L4.5 1.5 Z" fill="#4a6ea8"/></svg>
<svg class="a" style="left:1286px;top:411px" width="9" height="6" viewBox="0 0 9 6"><path d="M1 1 L8 1 L4.5 4.5 Z" fill="#4a6ea8"/></svg>
<svg class="a" style="left:296px;top:324px" width="8" height="9" viewBox="0 0 8 9"><path d="M0.5 1 L7.5 1 L4.6 4.5 L4.6 8 L3.4 8 L3.4 4.5 Z" fill="#8aa6cf"/></svg>
<svg class="a" style="left:298px;top:345px" width="5" height="8" viewBox="0 0 5 8"><path d="M0.5 0.5 L4.5 4 L0.5 7.5 Z" fill="#8aa6cf"/></svg>
<div class="a" style="left:333px;top:342px;width:45px;height:16px;overflow:hidden"><div class="t" style="left:5px;top:2px;font-weight:bold;letter-spacing:0.85px">1013811</div></div>
<div class="t" style="left:391px;top:344px;font-size:12px;line-height:12px;font-weight:bold;letter-spacing:0.5px;">- test Mar silice citron</div>
<div class="t" style="left:682px;top:344px;width:117px;text-align:right;font-weight:bold;letter-spacing:1.0px">2,00000</div>
<div class="t" style="left:807px;top:344px;font-size:12px;line-height:12px;font-weight:bold;letter-spacing:0.5px;">g</div>
<div class="t" style="left:1048px;top:344px;font-size:12px;line-height:12px;font-weight:bold;letter-spacing:0.9px;">21.10.2015</div>
<div class="a" style="left:333px;top:363px;width:45px;height:16px;overflow:hidden"><div class="t" style="left:5px;top:2px;font-weight:bold;letter-spacing:0.85px">1006281</div></div>
<div class="t" style="left:391px;top:365px;font-size:12px;line-height:12px;font-weight:bold;letter-spacing:0.5px;">- test Mar silice citron</div>
<div class="t" style="left:682px;top:365px;width:117px;text-align:right;font-weight:bold;letter-spacing:1.0px">1,00000</div>
<div class="t" style="left:807px;top:365px;font-size:12px;line-height:12px;font-weight:bold;letter-spacing:0.5px;">g</div>
<div class="a" style="left:923px;top:363px;width:115px;height:16px;overflow:hidden"><div class="t" style="left:5px;top:2px;font-weight:bold;letter-spacing:0.9px">22.10.2015 0:00:0</div></div>
<div class="a" style="left:333px;top:384px;width:45px;height:16px;overflow:hidden"><div class="t" style="left:5px;top:2px;font-weight:bold;letter-spacing:0.85px">1006201</div></div>
<div class="t" style="left:391px;top:386px;font-size:12px;line-height:12px;font-weight:bold;letter-spacing:0.5px;">- test Mar vaselina</div>
<div class="t" style="left:682px;top:386px;width:117px;text-align:right;font-weight:bold;letter-spacing:1.0px">0,04000</div>
<div class="t" style="left:807px;top:386px;font-size:12px;line-height:12px;font-weight:bold;letter-spacing:0.5px;">kg</div>
<div class="a" style="left:333px;top:405px;width:45px;height:16px;overflow:hidden"><div class="t" style="left:5px;top:2px;font-weight:bold;letter-spacing:0.85px">1006241</div></div>
<div class="t" style="left:391px;top:407px;font-size:12px;line-height:12px;font-weight:bold;letter-spacing:0.5px;">- test |Mar lanolin</div>
<div class="t" style="left:682px;top:407px;width:117px;text-align:right;font-weight:bold;letter-spacing:1.0px">0,05000</div>
<div class="t" style="left:807px;top:407px;font-size:12px;line-height:12px;font-weight:bold;letter-spacing:0.5px;">kg</div>
<svg class="a" style="left:313px;top:342px;overflow:visible" width="16" height="16" viewBox="0 0 16 16"><rect x="0.6" y="0.6" width="15" height="14.6" rx="1" fill="#fff" stroke="#1a78bd" stroke-width="1.1"/><path d="M5.3 2V13M8.4 2V13M11.3 2V13" stroke="#a9c3df" stroke-width="0.9"/><path d="M2.2 2.6H4.8M6 2.6H7.9M9 2.6H10.8M12 2.6H13.8" stroke="#f6b422" stroke-width="1.2"/><path d="M2.2 3.8H13.8" stroke="#8fc3f0" stroke-width="0.8"/><rect x="2.4" y="6.6" width="11.4" height="3.1" fill="#c7e0f6" stroke="#0d53b2" stroke-width="1.1"/></svg>
<svg class="a" style="left:313px;top:363px;overflow:visible" width="16" height="16" viewBox="0 0 16 16"><rect x="0.6" y="0.6" width="15" height="14.6" rx="1" fill="#fff" stroke="#1a78bd" stroke-width="1.1"/><path d="M5.3 2V13M8.4 2V13M11.3 2V13" stroke="#a9c3df" stroke-width="0.9"/><path d="M2.2 2.6H4.8M6 2.6H7.9M9 2.6H10.8M12 2.6H13.8" stroke="#f6b422" stroke-width="1.2"/><path d="M2.2 3.8H13.8" stroke="#8fc3f0" stroke-width="0.8"/><rect x="2.4" y="6.6" width="11.4" height="3.1" fill="#c7e0f6" stroke="#0d53b2" stroke-width="1.1"/></svg>
<svg class="a" style="left:313px;top:384px;overflow:visible" width="16" height="16" viewBox="0 0 16 16"><rect x="0.6" y="0.6" width="15" height="14.6" rx="1" fill="#fff" stroke="#1a78bd" stroke-width="1.1"/><path d="M5.3 2V13M8.4 2V13M11.3 2V13" stroke="#a9c3df" stroke-width="0.9"/><path d="M2.2 2.6H4.8M6 2.6H7.9M9 2.6H10.8M12 2.6H13.8" stroke="#f6b422" stroke-width="1.2"/><path d="M2.2 3.8H13.8" stroke="#8fc3f0" stroke-width="0.8"/><rect x="2.4" y="6.6" width="11.4" height="3.1" fill="#c7e0f6" stroke="#0d53b2" stroke-width="1.1"/></svg>
<svg class="a" style="left:313px;top:405px;overflow:visible" width="16" height="16" viewBox="0 0 16 16"><rect x="0.6" y="0.6" width="15" height="14.6" rx="1" fill="#fff" stroke="#1a78bd" stroke-width="1.1"/><path d="M5.3 2V13M8.4 2V13M11.3 2V13" stroke="#a9c3df" stroke-width="0.9"/><path d="M2.2 2.6H4.8M6 2.6H7.9M9 2.6H10.8M12 2.6H13.8" stroke="#f6b422" stroke-width="1.2"/><path d="M2.2 3.8H13.8" stroke="#8fc3f0" stroke-width="0.8"/><rect x="2.4" y="6.6" width="11.4" height="3.1" fill="#c7e0f6" stroke="#0d53b2" stroke-width="1.1"/></svg>
<svg class="a" style="left:1216px;top:322px;overflow:visible" width="13" height="13" viewBox="0 0 13 13"><defs><linearGradient id="cbg" x1="0" y1="0" x2="1" y2="1"><stop offset="0" stop-color="#d2d4d8"/><stop offset="1" stop-color="#f7f7f8"/></linearGradient><linearGradient id="cbi" x1="0" y1="0" x2="0" y2="1"><stop offset="0" stop-color="#7ec4f6"/><stop offset="1" stop-color="#2482d6"/></linearGradient><linearGradient id="cbb" x1="0" y1="0" x2="1" y2="1"><stop offset="0" stop-color="#c6defa"/><stop offset="1" stop-color="#f4f9ff"/></linearGradient></defs><rect x="0.5" y="0.5" width="12" height="12" fill="#fff" stroke="#8a8a8a"/><rect x="2.3" y="2.3" width="8.4" height="8.4" rx="1" fill="url(#cbi)" stroke="#12304f" stroke-width="1"/></svg>
<svg class="a" style="left:1216px;top:343px;overflow:visible" width="13" height="13" viewBox="0 0 13 13"><defs><linearGradient id="cbg" x1="0" y1="0" x2="1" y2="1"><stop offset="0" stop-color="#d2d4d8"/><stop offset="1" stop-color="#f7f7f8"/></linearGradient><linearGradient id="cbi" x1="0" y1="0" x2="0" y2="1"><stop offset="0" stop-color="#7ec4f6"/><stop offset="1" stop-color="#2482d6"/></linearGradient><linearGradient id="cbb" x1="0" y1="0" x2="1" y2="1"><stop offset="0" stop-color="#c6defa"/><stop offset="1" stop-color="#f4f9ff"/></linearGradient></defs><rect x="0.5" y="0.5" width="12" height="12" fill="#fff" stroke="#8a8a8a"/><rect x="2" y="2" width="9" height="9" fill="url(#cbg)"/></svg>
<svg class="a" style="left:1216px;top:364px;overflow:visible" width="13" height="13" viewBox="0 0 13 13"><defs><linearGradient id="cbg" x1="0" y1="0" x2="1" y2="1"><stop offset="0" stop-color="#d2d4d8"/><stop offset="1" stop-color="#f7f7f8"/></linearGradient><linearGradient id="cbi" x1="0" y1="0" x2="0" y2="1"><stop offset="0" stop-color="#7ec4f6"/><stop offset="1" stop-color="#2482d6"/></linearGradient><linearGradient id="cbb" x1="0" y1="0" x2="1" y2="1"><stop offset="0" stop-color="#c6defa"/><stop offset="1" stop-color="#f4f9ff"/></linearGradient></defs><rect x="0.5" y="0.5" width="12" height="12" fill="#fff" stroke="#8a8a8a"/><rect x="2" y="2" width="9" height="9" fill="url(#cbg)"/><path d="M3.3 6.6 L5.3 10 L9.6 2.6" fill="none" stroke="#3a5aa8" stroke-width="1.5"/></svg>
<svg class="a" style="left:1216px;top:385px;overflow:visible" width="13" height="13" viewBox="0 0 13 13"><defs><linearGradient id="cbg" x1="0" y1="0" x2="1" y2="1"><stop offset="0" stop-color="#d2d4d8"/><stop offset="1" stop-color="#f7f7f8"/></linearGradient><linearGradient id="cbi" x1="0" y1="0" x2="0" y2="1"><stop offset="0" stop-color="#7ec4f6"/><stop offset="1" stop-color="#2482d6"/></linearGradient><linearGradient id="cbb" x1="0" y1="0" x2="1" y2="1"><stop offset="0" stop-color="#c6defa"/><stop offset="1" stop-color="#f4f9ff"/></linearGradient></defs><rect x="0.5" y="0.5" width="12" height="12" fill="#fff" stroke="#8a8a8a"/><rect x="2" y="2" width="9" height="9" fill="url(#cbg)"/><path d="M3.3 6.6 L5.3 10 L9.6 2.6" fill="none" stroke="#3a5aa8" stroke-width="1.5"/></svg>
<svg class="a" style="left:1216px;top:406px;overflow:visible" width="13" height="13" viewBox="0 0 13 13"><defs><linearGradient id="cbg" x1="0" y1="0" x2="1" y2="1"><stop offset="0" stop-color="#d2d4d8"/><stop offset="1" stop-color="#f7f7f8"/></linearGradient><linearGradient id="cbi" x1="0" y1="0" x2="0" y2="1"><stop offset="0" stop-color="#7ec4f6"/><stop offset="1" stop-color="#2482d6"/></linearGradient><linearGradient id="cbb" x1="0" y1="0" x2="1" y2="1"><stop offset="0" stop-color="#c6defa"/><stop offset="1" stop-color="#f4f9ff"/></linearGradient></defs><rect x="0.5" y="0.5" width="12" height="12" fill="#fff" stroke="#8a8a8a"/><rect x="2" y="2" width="9" height="9" fill="url(#cbg)"/><path d="M3.3 6.6 L5.3 10 L9.6 2.6" fill="none" stroke="#3a5aa8" stroke-width="1.5"/></svg>
<div class="t" style="left:312px;top:438px;font-size:12px;line-height:12px;letter-spacing:0.45px;">Count=4</div>
<div class="a" style="left:1157px;top:278px;width:154px;height:174px;border:5px solid #ec1c24"></div>
<div class="t" style="left:-112px;top:505px;width:400.5px;text-align:right;font-size:12px;line-height:12px;letter-spacing:0.5px;font-weight:bold;">Materiál:</div>
<div class="a" style="left:292px;top:498px;width:162px;height:26px;border:1px solid #8eacdb;border-radius:2px;background:#fff"></div>
<div class="t" style="left:320px;top:505px;font-size:12px;line-height:12px;color:#7ba3d6;letter-spacing:0.2px;">- test Mar silice citron</div>
<div class="t" style="left:-112px;top:541px;width:400.5px;text-align:right;font-size:12px;line-height:12px;letter-spacing:0.5px;font-weight:bold;">Množství:</div>
<div class="a" style="left:292px;top:536px;width:300px;height:22px;border:1px solid #8eacdb;border-radius:2px;background:#fff"></div>
<div class="t" style="left:298px;top:541px;font-size:12px;line-height:12px;letter-spacing:0.3px;">2,00000</div>
<div class="t" style="left:-112px;top:620px;width:400.5px;text-align:right;font-size:12px;line-height:12px;letter-spacing:0.5px;font-weight:bold;">Jednotka (m):</div>
<div class="a" style="left:292px;top:570px;width:31px;height:114px;border:1px solid #8eacdb;border-radius:2px;background:#fff"></div>
<div class="a" style="left:295px;top:594px;width:25px;height:22px;border:1px solid #f5c24a;border-radius:2px;background:linear-gradient(#fbd7a1,#fce6ab)"></div>
<div class="t" style="left:297px;top:577px;font-size:12px;line-height:12px;letter-spacing:0.3px;">mg</div>
<div class="t" style="left:297px;top:599px;font-size:12px;line-height:12px;letter-spacing:0.3px;">g</div>
<div class="t" style="left:297px;top:621px;font-size:12px;line-height:12px;letter-spacing:0.3px;">dkg</div>
<div class="t" style="left:297px;top:643px;font-size:12px;line-height:12px;letter-spacing:0.3px;">kg</div>
<div class="t" style="left:297px;top:665px;font-size:12px;line-height:12px;letter-spacing:0.3px;">t</div>
<div class="t" style="left:-112px;top:698px;width:400.3px;text-align:right;font-size:12px;line-height:12px;letter-spacing:0.3px;">Nutný pro zahájení výroby:</div>
<div class="t" style="left:-112px;top:728px;width:400.3px;text-align:right;font-size:12px;line-height:12px;letter-spacing:0.3px;">Od:</div>
<div class="a" style="left:292px;top:723px;width:84px;height:22px;border:1px solid #8eacdb;border-radius:2px;background:#fff"></div>
<div class="t" style="left:299px;top:728px;font-size:12px;line-height:12px;font-style:italic;color:#8c8c8c;letter-spacing:0.2px;">Enter date</div>
<div class="t" style="left:-112px;top:762px;width:400.3px;text-align:right;font-size:12px;line-height:12px;letter-spacing:0.3px;">Do:</div>
<div class="a" style="left:292px;top:757px;width:89px;height:22px;border:1px solid #8eacdb;border-radius:2px;background:#fff"></div>
<div class="t" style="left:298px;top:762px;font-size:12px;line-height:12px;letter-spacing:0.3px;">21.10.2015</div>
<div class="a" style="left:361px;top:724px;width:14px;height:20px;border-left:1px solid #8eacdb;border-right:1px solid #fff;border-top:1px solid #fff;border-bottom:1px solid #fff;background:linear-gradient(#e6f0fd 0%,#dbe9fb 45%,#c6def6 50%,#c3e2f8 100%)"></div>
<div class="a" style="left:366px;top:758px;width:14px;height:20px;border-left:1px solid #8eacdb;border-right:1px solid #fff;border-top:1px solid #fff;border-bottom:1px solid #fff;background:linear-gradient(#e6f0fd 0%,#dbe9fb 45%,#c6def6 50%,#c3e2f8 100%)"></div>
<svg class="a" style="left:365px;top:730px" width="7" height="9" viewBox="0 0 7 9"><rect x="0" y="0" width="7" height="7" rx="0.5" fill="#2f5da0"/><rect x="1" y="1" width="1" height="1" fill="#fff"/><rect x="1" y="3" width="1" height="1" fill="#fff"/><rect x="1" y="5" width="1" height="1" fill="#fff"/><rect x="3" y="1" width="1" height="1" fill="#fff"/><rect x="3" y="3" width="1" height="1" fill="#fff"/><rect x="3" y="5" width="1" height="1" fill="#fff"/><rect x="5" y="1" width="1" height="1" fill="#fff"/><rect x="5" y="3" width="1" height="1" fill="#fff"/><rect x="5" y="5" width="1" height="1" fill="#fff"/><rect x="0" y="7.8" width="7" height="1" fill="#fff"/></svg>
<svg class="a" style="left:370px;top:764px" width="7" height="9" viewBox="0 0 7 9"><rect x="0" y="0" width="7" height="7" rx="0.5" fill="#2f5da0"/><rect x="1" y="1" width="1" height="1" fill="#fff"/><rect x="1" y="3" width="1" height="1" fill="#fff"/><rect x="1" y="5" width="1" height="1" fill="#fff"/><rect x="3" y="1" width="1" height="1" fill="#fff"/><rect x="3" y="3" width="1" height="1" fill="#fff"/><rect x="3" y="5" width="1" height="1" fill="#fff"/><rect x="5" y="1" width="1" height="1" fill="#fff"/><rect x="5" y="3" width="1" height="1" fill="#fff"/><rect x="5" y="5" width="1" height="1" fill="#fff"/><rect x="0" y="7.8" width="7" height="1" fill="#fff"/></svg>
<div class="a" style="left:292px;top:791px;width:57px;height:36px;border:1px solid #7f8a98;border-radius:3px;box-shadow:inset 0 0 0 1px #fff;background:linear-gradient(#fcfcfc,#eeeff1 50%,#d4d8de)"></div>
<div class="t" style="left:322px;top:804px;font-size:12px;line-height:12px;letter-spacing:0.3px;">OK</div>
<svg class="a" style="left:295px;top:502px;overflow:visible" width="16" height="16" viewBox="0 0 16 16"><defs><linearGradient id="cb" x1="0" y1="0" x2="1" y2="1"><stop offset="0" stop-color="#7fb8ea"/><stop offset="1" stop-color="#b7dafa"/></linearGradient></defs><path d="M0.6 4.8 L7.5 1.2 L14.4 4.8 L14.4 12 L7.5 15.6 L0.6 12 Z" fill="url(#cb)" stroke="#4f90d0" stroke-width="0.9" stroke-linejoin="round"/><path d="M0.8 5 L7.5 8.6 L14.2 5 L7.5 1.4 Z" fill="#a6d0f6"/><ellipse cx="7.5" cy="2.6" rx="2.1" ry="1" fill="#c9e4fb" stroke="#5a9ad6" stroke-width="0.6"/><ellipse cx="4.3" cy="4.4" rx="2.1" ry="1" fill="#c9e4fb" stroke="#5a9ad6" stroke-width="0.6"/><ellipse cx="10.7" cy="4.4" rx="2.1" ry="1" fill="#c9e4fb" stroke="#5a9ad6" stroke-width="0.6"/><ellipse cx="7.5" cy="6.2" rx="2.1" ry="1" fill="#c9e4fb" stroke="#5a9ad6" stroke-width="0.6"/><path d="M1 5.3 L7.5 8.8 L14 5.3 M7.5 8.8 V15.3" fill="none" stroke="#eef8ff" stroke-width="0.8"/></svg>
<svg class="a" style="left:459px;top:502px;overflow:visible" width="17" height="17" viewBox="0 0 17 17"><defs><linearGradient id="psg" x1="0" y1="0" x2="1" y2="0"><stop offset="0" stop-color="#f3e3cc"/><stop offset="0.3" stop-color="#dcc19c"/><stop offset="1" stop-color="#d2b48e"/></linearGradient></defs><rect x="0.6" y="2.2" width="10.4" height="12.6" rx="1.2" fill="url(#psg)" stroke="#c9ad88" stroke-width="0.7"/><rect x="3.8" y="1" width="3.8" height="2.6" rx="0.6" fill="#d8d8dc" stroke="#b5b5b8" stroke-width="0.5"/><path d="M6.5 4.6 H12.8 L15.8 7.6 V15.8 H6.5 Z" fill="#fff" stroke="#78ade0" stroke-width="1"/><path d="M8.2 7.2H12.5M8.2 9H13.8M8.2 10.8H13.8" stroke="#d2e4f4" stroke-width="0.9"/><rect x="8" y="12.3" width="6" height="2" fill="#c8ddef"/></svg>
<svg class="a" style="left:487px;top:504px;overflow:visible" width="13" height="13" viewBox="0 0 13 13"><path d="M2.3 2.3L10.7 10.7M10.7 2.3L2.3 10.7" stroke="#e6222c" stroke-width="4" stroke-linecap="round"/><path d="M2.3 2.3L10.7 10.7M10.7 2.3L2.3 10.7" stroke="#f76d76" stroke-width="2.2" stroke-linecap="round"/></svg>
<svg class="a" style="left:330px;top:621px;overflow:visible" width="13" height="13" viewBox="0 0 13 13"><path d="M2.3 2.3L10.7 10.7M10.7 2.3L2.3 10.7" stroke="#e6222c" stroke-width="4" stroke-linecap="round"/><path d="M2.3 2.3L10.7 10.7M10.7 2.3L2.3 10.7" stroke="#f76d76" stroke-width="2.2" stroke-linecap="round"/></svg>
<svg class="a" style="left:293px;top:697px;overflow:visible" width="13" height="13" viewBox="0 0 13 13"><defs><linearGradient id="cbg" x1="0" y1="0" x2="1" y2="1"><stop offset="0" stop-color="#d2d4d8"/><stop offset="1" stop-color="#f7f7f8"/></linearGradient><linearGradient id="cbi" x1="0" y1="0" x2="0" y2="1"><stop offset="0" stop-color="#7ec4f6"/><stop offset="1" stop-color="#2482d6"/></linearGradient><linearGradient id="cbb" x1="0" y1="0" x2="1" y2="1"><stop offset="0" stop-color="#c6defa"/><stop offset="1" stop-color="#f4f9ff"/></linearGradient></defs><rect x="0.5" y="0.5" width="12" height="12" fill="#fff" stroke="#7b9fd5"/><rect x="2.3" y="2.3" width="8.4" height="8.4" fill="url(#cbb)" stroke="#a9c6ee" stroke-width="0.6"/><path d="M3.2 8 L5.2 10.2 L9 3.8" fill="none" stroke="#3b62a6" stroke-width="1.5"/></svg>
<svg class="a" style="left:380px;top:726px;overflow:visible" width="16" height="16" viewBox="0 0 16 16"><defs><radialGradient id="hg" cx="0.4" cy="0.3" r="0.8"><stop offset="0" stop-color="#8cc3f5"/><stop offset="1" stop-color="#2166c2"/></radialGradient></defs><circle cx="8" cy="8" r="7.3" fill="url(#hg)" stroke="#1d5aa8" stroke-width="0.9"/><path d="M5.6 6 Q5.6 3.6 8 3.6 Q10.4 3.6 10.4 5.7 Q10.4 7 8.9 7.8 Q8 8.3 8 9.5" fill="none" stroke="#fff" stroke-width="1.6"/><rect x="7.1" y="10.8" width="1.8" height="1.8" fill="#fff"/></svg>
<svg class="a" style="left:388px;top:762px;overflow:visible" width="13" height="13" viewBox="0 0 13 13"><path d="M2.3 2.3L10.7 10.7M10.7 2.3L2.3 10.7" stroke="#e6222c" stroke-width="4" stroke-linecap="round"/><path d="M2.3 2.3L10.7 10.7M10.7 2.3L2.3 10.7" stroke="#f76d76" stroke-width="2.2" stroke-linecap="round"/></svg>
<svg class="a" style="left:411px;top:760px;overflow:visible" width="16" height="16" viewBox="0 0 16 16"><defs><radialGradient id="hg" cx="0.4" cy="0.3" r="0.8"><stop offset="0" stop-color="#8cc3f5"/><stop offset="1" stop-color="#2166c2"/></radialGradient></defs><circle cx="8" cy="8" r="7.3" fill="url(#hg)" stroke="#1d5aa8" stroke-width="0.9"/><path d="M5.6 6 Q5.6 3.6 8 3.6 Q10.4 3.6 10.4 5.7 Q10.4 7 8.9 7.8 Q8 8.3 8 9.5" fill="none" stroke="#fff" stroke-width="1.6"/><rect x="7.1" y="10.8" width="1.8" height="1.8" fill="#fff"/></svg>
<svg class="a" style="left:302px;top:801px;overflow:visible" width="16" height="16" viewBox="0 0 16 16"><defs><linearGradient id="flg" x1="0" y1="0" x2="0" y2="1"><stop offset="0" stop-color="#3a9be6"/><stop offset="1" stop-color="#a9d9fa"/></linearGradient></defs><rect x="0.6" y="0.6" width="14.8" height="14.4" rx="1.5" fill="url(#flg)" stroke="#1c7cc6" stroke-width="1.2"/><rect x="3" y="1.5" width="10" height="6" rx="0.8" fill="#f4f9fd"/><path d="M4.2 3.3H7M8 3.3H10.5M4.2 5.3H5.5M6.5 5.3H8.5M9.5 5.3H10.5" stroke="#7d8794" stroke-width="0.9"/><rect x="4" y="10" width="7.5" height="5.5" fill="#eef1f4"/><rect x="5.6" y="11" width="1.6" height="3.5" fill="#3b4452"/></svg>
</body></html>
